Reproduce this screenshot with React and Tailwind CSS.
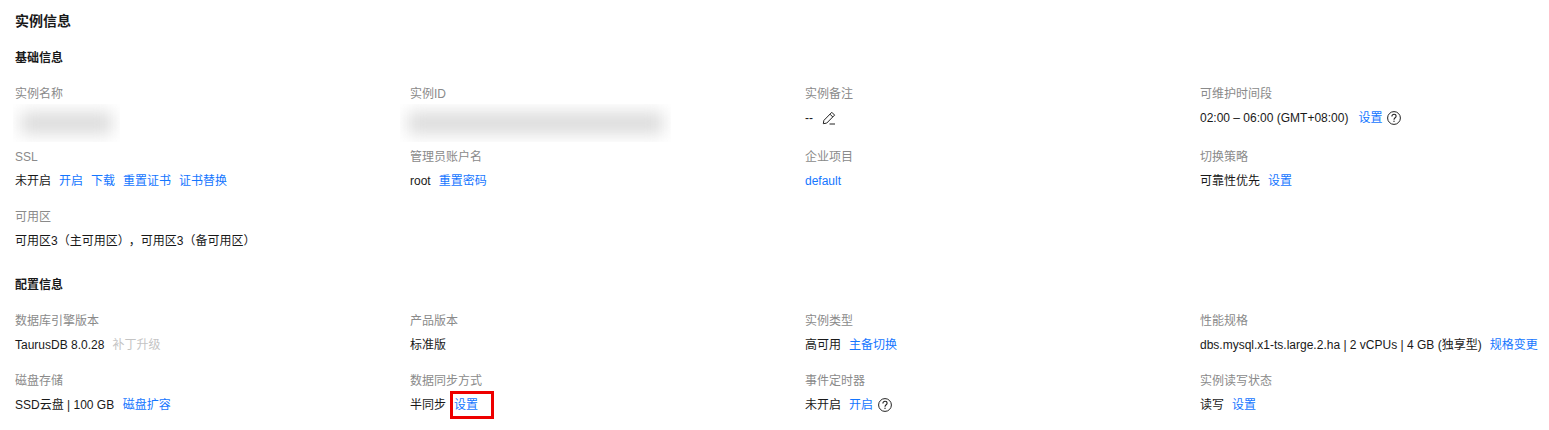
import React from 'react';

const Link = ({ children, ml = 'ml-2', className = '' }) => (
  <a className={`text-[#1476ff] ${ml} ${className}`}>{children}</a>
);

const Help = () => (
  <svg width="14" height="14" viewBox="0 0 14 14" fill="none" className="ml-[5px] text-[#222]">
    <circle cx="7" cy="7" r="6.4" stroke="currentColor" strokeWidth="1" />
    <path d="M4.9 5.4C4.9 4 5.9 3.3 7 3.3s2.1.8 2.1 1.9C9.1 6.8 7 6.8 7 8.7" stroke="currentColor" strokeWidth="1.1" />
    <rect x="6.4" y="9.7" width="1.2" height="1.2" fill="currentColor" />
  </svg>
);

const Pencil = () => (
  <svg width="14" height="14" viewBox="0 0 14 14" fill="none" className="ml-[9px] text-[#222]">
    <path d="M1.3 12.7l.6-3.3L9.8 1.3l2.8 2.8-7.9 8-3.4.6zM8 3.2l2.8 2.8M7.5 13h5.5" stroke="currentColor" strokeWidth="1" strokeLinejoin="round" />
  </svg>
);

const Blurred = ({ className }) => (
  <div className={`h-[38px] self-start -mt-[2px] bg-white overflow-hidden ${className}`}>
    <div className="mx-2 mt-[8px] h-[22px] bg-[#dcdcdc] blur-[8px]" />
  </div>
);

const Cell = ({ label, children, bar }) => (
  <div className="min-w-0">
    <div className="h-6 leading-6 text-[#8a8a8a]">{label}</div>
    <div className={`flex items-center ${bar ? 'h-[39px] pb-[15px]' : 'h-9 pb-3'}`}>{children}</div>
  </div>
);

const SectionTitle = ({ children, className }) => (
  <h3 className={`font-bold text-[#191919] text-xs leading-5 ${className}`}>{children}</h3>
);

const App = () => (
  <div
    className="w-[1549px] h-[430px] overflow-hidden bg-white pl-[15px] pt-[11px] text-xs text-[#191919]"
    style={{ fontFamily: '"Liberation Sans", "Noto Sans CJK SC", sans-serif' }}
  >
    <h2 className="font-bold text-sm leading-5">实例信息</h2>
    <SectionTitle className="mt-[17px]">基础信息</SectionTitle>

    <div className="grid grid-cols-[395px_395px_395px_344px] mt-[14px]">
      <Cell label="实例名称" bar>
        <Blurred className="w-[107px] -ml-0.5" />
      </Cell>
      <Cell label="实例ID" bar>
        <Blurred className="w-[271px] -ml-2.5" />
      </Cell>
      <Cell label="实例备注" bar>
        <span>--</span>
        <Pencil />
      </Cell>
      <Cell label="可维护时间段" bar>
        <span>02:00 – 06:00 (GMT+08:00)</span>
        <Link ml="ml-2.5">设置</Link>
        <Help />
      </Cell>

      <Cell label="SSL">
        <span>未开启</span>
        <Link>开启</Link>
        <Link>下载</Link>
        <Link>重置证书</Link>
        <Link>证书替换</Link>
      </Cell>
      <Cell label="管理员账户名">
        <span>root</span>
        <Link>重置密码</Link>
      </Cell>
      <Cell label="企业项目">
        <Link ml="ml-0">default</Link>
      </Cell>
      <Cell label="切换策略">
        <span>可靠性优先</span>
        <Link>设置</Link>
      </Cell>

      <div className="col-span-4">
        <Cell label="可用区">
          <span>
            可用区3（主可用区）<span className="ml-[5px]">，</span>可用区3（备可用区）
          </span>
        </Cell>
      </div>
    </div>

    <SectionTitle className="mt-2.5">配置信息</SectionTitle>

    <div className="grid grid-cols-[395px_395px_395px_344px] mt-[14px]">
      <Cell label="数据库引擎版本">
        <span>TaurusDB 8.0.28</span>
        <span className="ml-2 text-[#c4c4c4]">补丁升级</span>
      </Cell>
      <Cell label="产品版本">
        <span>标准版</span>
      </Cell>
      <Cell label="实例类型">
        <span>高可用</span>
        <Link>主备切换</Link>
      </Cell>
      <Cell label="性能规格">
        <span className="whitespace-nowrap">dbs.mysql.x1-ts.large.2.ha | 2 vCPUs | 4 GB (独享型)</span>
        <Link className="whitespace-nowrap">规格变更</Link>
      </Cell>

      <Cell label="磁盘存储">
        <span>SSD云盘 | 100 GB</span>
        <Link ml="ml-[8.5px]">磁盘扩容</Link>
      </Cell>
      <Cell label="数据同步方式">
        <span>半同步</span>
        <Link className="relative">
          设置
          <span className="absolute -left-1 -right-4 -top-[6px] -bottom-[6px] border-[3px] border-[#ee0000]" />
        </Link>
      </Cell>
      <Cell label="事件定时器">
        <span>未开启</span>
        <Link>开启</Link>
        <Help />
      </Cell>
      <Cell label="实例读写状态">
        <span>读写</span>
        <Link>设置</Link>
      </Cell>
    </div>
  </div>
);

export default App;
